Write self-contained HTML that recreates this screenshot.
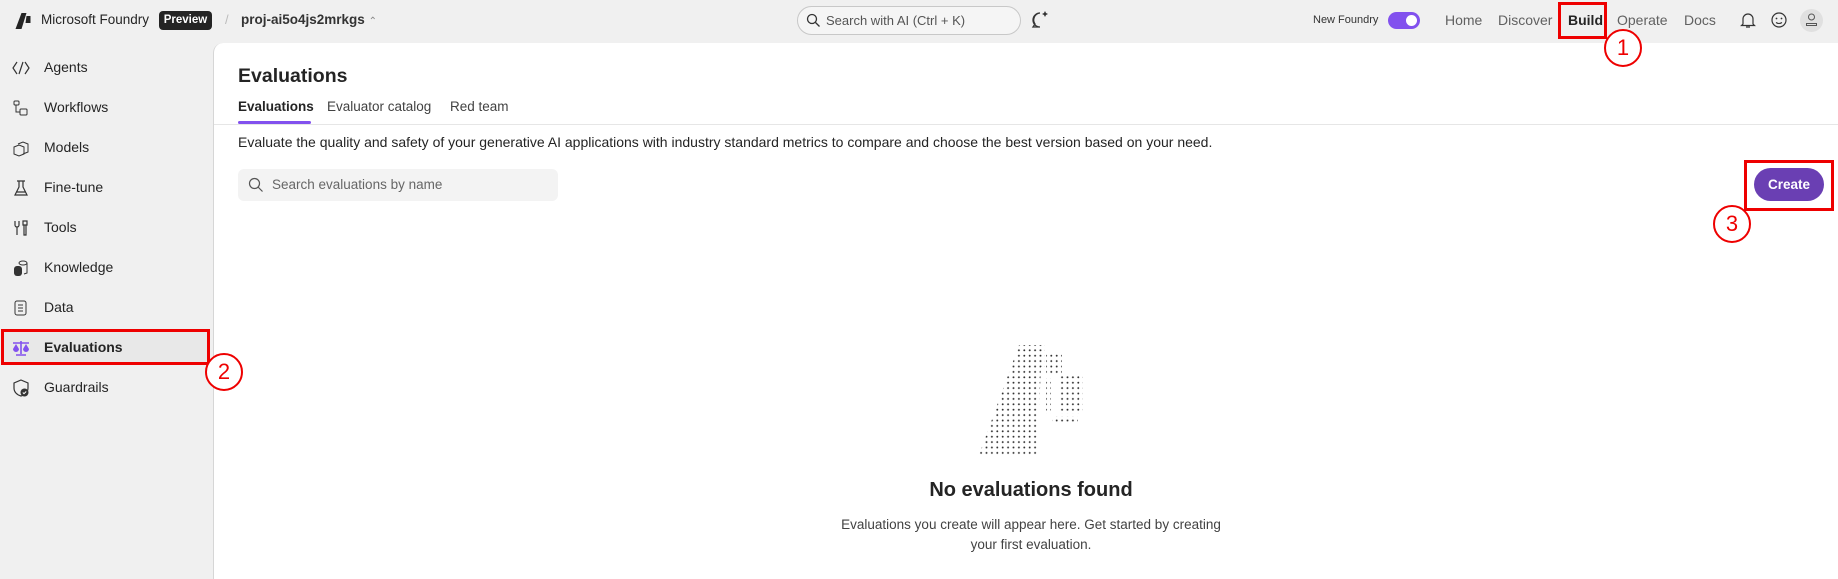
<!DOCTYPE html>
<html><head><meta charset="utf-8"><style>
*{box-sizing:border-box;margin:0;padding:0}
body{width:1838px;height:579px;background:#f0f0f0;font-family:"Liberation Sans",sans-serif;color:#242424;position:relative;overflow:hidden}
.a{position:absolute;white-space:nowrap}
.nav{font-size:14px;color:#616161;top:12px}
.side{font-size:14px;color:#242424;left:44px}
.ico{position:absolute;left:12px;width:18px;height:18px}
.rc{position:absolute;border:2px solid #e00;border-radius:50%;background:#fff;color:#e00;font-size:22px;text-align:center}
</style></head><body>
<!-- top bar -->
<svg class="a" style="left:15px;top:12px" width="17" height="18" viewBox="0 0 16 18"><path d="M6 1h5l-5 16H0z" fill="#242424"/><path d="M11 4h4v7h-5z" fill="#242424"/></svg>
<div class="a" style="left:41px;top:12px;font-size:13.5px;color:#242424">Microsoft Foundry</div>
<div class="a" style="left:159px;top:11px;width:53px;height:19px;background:#242424;border-radius:4px;color:#fff;font-size:11.5px;font-weight:bold;text-align:center;line-height:19px">Preview</div>
<div class="a" style="left:225px;top:12px;font-size:13px;color:#bbb">/</div>
<div class="a" style="left:241px;top:12px;font-size:13.5px;font-weight:bold;color:#333">proj-ai5o4js2mrkgs <span style="font-weight:normal;color:#888;font-size:10px">⌃</span></div>
<div class="a" style="left:797px;top:6px;width:224px;height:29px;border:1px solid #c8c8c8;border-radius:15px;background:#f5f5f5"></div>
<svg class="a" style="left:806px;top:13px" width="15" height="15" viewBox="0 0 15 15"><circle cx="6" cy="6" r="4.5" fill="none" stroke="#333" stroke-width="1.3"/><path d="M9.5 9.5L13.5 13.5" stroke="#333" stroke-width="1.3"/></svg>
<div class="a" style="left:826px;top:13px;font-size:13px;color:#555">Search with AI (Ctrl + K)</div>
<svg class="a" style="left:1030px;top:10px" width="20" height="20" viewBox="0 0 20 20"><path d="M10 3a7 7 0 1 0 0 14H3l2-3A7 7 0 0 1 10 3" fill="none" stroke="#333" stroke-width="1.3"/><path d="M15 1l1 2 2 1-2 1-1 2-1-2-2-1 2-1z" fill="#333"/></svg>
<div class="a" style="left:1313px;top:14px;font-size:11px;color:#333">New Foundry</div>
<div class="a" style="left:1388px;top:12px;width:32px;height:17px;border-radius:9px;background:#8251ee"></div>
<div class="a" style="left:1406px;top:15px;width:11px;height:11px;border-radius:50%;background:#fff"></div>
<div class="a nav" style="left:1445px">Home</div>
<div class="a nav" style="left:1498px">Discover</div>
<div class="a nav" style="left:1568px;color:#242424;font-weight:bold">Build</div>
<div class="a" style="left:1558px;top:2px;width:49px;height:37px;border:3px solid #e00"></div>
<div class="a nav" style="left:1617px">Operate</div>
<div class="a nav" style="left:1684px">Docs</div>
<svg class="a" style="left:1739px;top:11px" width="18" height="18" viewBox="0 0 18 18"><path d="M4 13V8a5 5 0 0 1 10 0v5l1.5 1.5h-13zM7 16h4" fill="none" stroke="#333" stroke-width="1.2"/></svg>
<svg class="a" style="left:1770px;top:11px" width="18" height="18" viewBox="0 0 18 18"><circle cx="9" cy="9" r="7" fill="none" stroke="#333" stroke-width="1.2"/><circle cx="6.5" cy="7.5" r=".9" fill="#333"/><circle cx="11.5" cy="7.5" r=".9" fill="#333"/><path d="M6 11.5q3 2 6 0" fill="none" stroke="#333" stroke-width="1.1"/></svg>
<div class="a" style="left:1800px;top:9px;width:23px;height:23px;border-radius:50%;background:#e0e0e0"></div>
<svg class="a" style="left:1805px;top:13px" width="13" height="14" viewBox="0 0 13 14"><circle cx="6.5" cy="4" r="3" fill="none" stroke="#555"/><path d="M1.5 12.5v-2h10v2z" fill="none" stroke="#555"/></svg>

<!-- main panel -->
<div class="a" style="left:213px;top:43px;width:1625px;height:536px;background:#fff;border-top-left-radius:10px;border-left:1px solid #d6d6d6"></div>

<!-- sidebar -->
<div class="a" style="left:2px;top:330px;width:207px;height:34px;background:#e8e8e8"></div>
<div class="a" style="left:1px;top:329px;width:209px;height:36px;border:3px solid #e00"></div>
<svg class="ico" style="top:59px" viewBox="0 0 18 18"><path d="M5 3L1 9l4 6M13 3l4 6-4 6M11 3L7 15" fill="none" stroke="#333" stroke-width="1.2"/></svg>
<div class="a side" style="top:59px">Agents</div>
<svg class="ico" style="top:99px" viewBox="0 0 18 18"><rect x="2" y="2" width="5" height="4" rx="1" fill="none" stroke="#333"/><rect x="8" y="10" width="7" height="6" rx="1" fill="none" stroke="#333"/><path d="M4 6v7h4" fill="none" stroke="#333"/></svg>
<div class="a side" style="top:99px">Workflows</div>
<svg class="ico" style="top:139px" viewBox="0 0 18 18"><path d="M6 5l5-2 5 2v8l-5 2M2 8l5-2 5 2v7l-5 2-5-2z" fill="none" stroke="#333"/></svg>
<div class="a side" style="top:139px">Models</div>
<svg class="ico" style="top:179px" viewBox="0 0 18 18"><path d="M5 2h8M7 2v6l-4 8h12l-4-8V2M4 13h10" fill="none" stroke="#333" stroke-width="1.2"/></svg>
<div class="a side" style="top:179px">Fine-tune</div>
<svg class="ico" style="top:219px" viewBox="0 0 18 18"><path d="M3 2v4a2 2 0 0 0 4 0V2M5 8v8M11 2h4v4h-4zM12 6v10h2V6" fill="none" stroke="#333" stroke-width="1.2"/></svg>
<div class="a side" style="top:219px">Tools</div>
<svg class="ico" style="top:259px" viewBox="0 0 18 18"><ellipse cx="11" cy="4" rx="4" ry="2" fill="none" stroke="#333"/><path d="M15 4v10l-3 1" fill="none" stroke="#333"/><rect x="2" y="7" width="8" height="10" rx="3" fill="#333"/></svg>
<div class="a side" style="top:259px">Knowledge</div>
<svg class="ico" style="top:299px" viewBox="0 0 18 18"><rect x="3" y="2" width="11" height="14" rx="2" fill="none" stroke="#333"/><path d="M6 6h5M6 9h5M6 12h5" stroke="#333"/></svg>
<div class="a side" style="top:299px">Data</div>
<svg class="ico" style="top:339px" viewBox="0 0 18 18"><path d="M1 4h16M9 2v13M4 16h10" stroke="#8251ee" stroke-width="1.6"/><path d="M1 10a3 3 0 0 0 6 0L4 5zM11 10a3 3 0 0 0 6 0l-3-5z" fill="#8251ee"/></svg>
<div class="a side" style="top:339px;font-weight:bold">Evaluations</div>
<svg class="ico" style="top:379px" viewBox="0 0 18 18"><path d="M9 1l7 3v5c0 4-3 7-7 8-4-1-7-4-7-8V4z" fill="none" stroke="#333" stroke-width="1.2"/><circle cx="12.5" cy="13.5" r="4" fill="#333"/><path d="M10.8 13.5l1.2 1.2 2.2-2.2" stroke="#fff" fill="none"/></svg>
<div class="a side" style="top:379px">Guardrails</div>
<div class="rc" style="left:205px;top:353px;width:38px;height:38px;line-height:34px">2</div>

<div class="a" style="left:238px;top:65px;font-size:19.5px;font-weight:bold;color:#242424">Evaluations</div>
<div class="a" style="left:238px;top:99px;font-size:13.5px;font-weight:bold">Evaluations</div>
<div class="a" style="left:238px;top:121px;width:73px;height:3px;background:#8251ee;border-radius:2px"></div>
<div class="a" style="left:327px;top:99px;font-size:13.5px;color:#424242">Evaluator catalog</div>
<div class="a" style="left:450px;top:99px;font-size:13.5px;color:#424242">Red team</div>
<div class="a" style="left:214px;top:124px;width:1624px;height:1px;background:#e6e6e6"></div>
<div class="a" style="left:238px;top:134px;font-size:14px;color:#242424">Evaluate the quality and safety of your generative AI applications with industry standard metrics to compare and choose the best version based on your need.</div>
<div class="a" style="left:238px;top:169px;width:320px;height:32px;background:#f3f3f3;border-radius:6px"></div>
<svg class="a" style="left:248px;top:177px" width="16" height="16" viewBox="0 0 16 16"><circle cx="6.5" cy="6.5" r="5" fill="none" stroke="#555" stroke-width="1.2"/><path d="M10 10l4.5 4.5" stroke="#555" stroke-width="1.2"/></svg>
<div class="a" style="left:272px;top:177px;font-size:13.5px;color:#666">Search evaluations by name</div>
<div class="a" style="left:1754px;top:168px;width:70px;height:33px;border-radius:17px;background:#6a3fb3;color:#fff;font-size:13.5px;font-weight:bold;text-align:center;line-height:33px">Create</div>
<div class="a" style="left:1744px;top:160px;width:90px;height:51px;border:3px solid #e00"></div>
<div class="rc" style="left:1713px;top:205px;width:38px;height:38px;line-height:34px">3</div>
<div class="rc" style="left:1604px;top:29px;width:38px;height:38px;line-height:34px">1</div>

<svg class="a" style="left:975px;top:342px" width="115" height="115" viewBox="975 342 115 115">
<defs><pattern id="d" x="1" y="2" width="5.4" height="5.4" patternUnits="userSpaceOnUse"><circle cx="2.7" cy="2.7" r="0.95" fill="#333"/></pattern></defs>
<path fill="url(#d)" d="M1019 345h26v22l-4 0 -4 88h-58zM1046 352h16v24h-16zM1046 378h5v36h-5zM1060 376h23v38h-23zM1052 416h26v7h-26z"/>
</svg>
<div class="a" style="left:812px;top:479px;width:438px;text-align:center;font-size:20px;font-weight:bold;color:#242424">No evaluations found</div>
<div class="a" style="left:812px;top:515px;width:438px;text-align:center;font-size:13.5px;color:#424242;line-height:20px;white-space:normal">Evaluations you create will appear here. Get started by creating<br>your first evaluation.</div>
</body></html>
